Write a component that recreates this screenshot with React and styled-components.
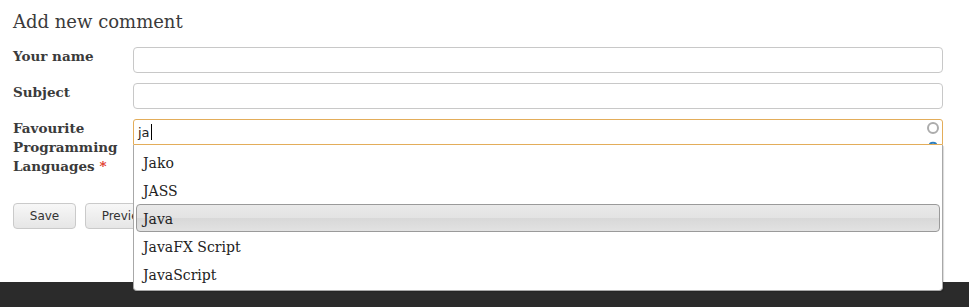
import styled, {createGlobalStyle} from "styled-components";

const GlobalStyle = createGlobalStyle`
  html, body {
    margin: 0;
    padding: 0;
    background: #fff;
  }
`

const Page = styled.div`
  min-height: 100vh;
  display: flex;
  flex-direction: column;
`
const Main = styled.main`
  flex: 1;
  padding: 10px 26px 0 13px;
`
const Heading = styled.h2`
  margin: 0 0 13px;
  font-family: "DejaVu Serif", Georgia, serif;
  font-weight: normal;
  font-size: 18px;
  line-height: 24px;
  color: #3b3b3b;
`
const Row = styled.div`
  display: grid;
  grid-template-columns: 120px 1fr;
  align-items: start;
  margin-bottom: 10px;
`
const Label = styled.label`
  font-family: "DejaVu Serif", Georgia, serif;
  font-weight: bold;
  font-size: 13.5px;
  line-height: 19px;
  color: #3b3b3b;
`
const Required = styled.span`
  color: #e0392b;
`
const Field = styled.div`
  position: relative;
`
const TextBox = styled.div`
  box-sizing: border-box;
  height: 26px;
  border: 1px solid ${(p) => (p.$focus ? "#e3ad5a" : "#c8c8c8")};
  border-radius: ${(p) => (p.$focus ? "3px 3px 0 0" : "4px")};
  background: #fff;
  padding: 0 24px 0 4px;
  display: flex;
  align-items: center;
  font-family: "DejaVu Sans", Verdana, sans-serif;
  font-size: 13px;
  color: #222;
`
const Caret = styled.span`
  display: inline-block;
  width: 1px;
  height: 16px;
  background: #000;
  margin-left: 1px;
`
const Throbber = styled.svg`
  position: absolute;
  right: 2px;
  top: 1px;
  width: 16px;
  height: 24px;
`
const Menu = styled.ul`
  position: absolute;
  top: 100%;
  left: 0;
  right: 0;
  box-sizing: border-box;
  height: 146px;
  margin: 0;
  padding: 3px 0 0;
  list-style: none;
  background: #fff;
  border: 1px solid #a8a8a8;
  border-top: none;
  border-radius: 0 0 4px 4px;
  box-shadow: 1px 1px 1px rgba(0, 0, 0, 0.15);
  z-index: 2;
`
const Item = styled.li`
  box-sizing: border-box;
  height: 28px;
  margin: 0 2px;
  padding: 1px 6px 0;
  display: flex;
  align-items: center;
  font-family: "DejaVu Serif", Georgia, serif;
  font-size: 14px;
  color: #222;
  border: 1px solid ${(p) => (p.$active ? "#9a9a9a" : "transparent")};
  border-radius: 4px;
  background: ${(p) => (p.$active ? "linear-gradient(#e9e9e9 0%, #e3e3e3 50%, #d8d8d8 51%, #e2e2e2 100%)" : "transparent")};
`
const Actions = styled.div`
  display: flex;
  gap: 9px;
  margin-top: 27px;
`
const Button = styled.button`
  height: 26px;
  width: ${(p) => p.$w}px;
  border: 1px solid #cacaca;
  border-radius: 4px;
  background: linear-gradient(#f7f7f7, #e6e6e6);
  font-family: "DejaVu Sans", Verdana, sans-serif;
  font-size: 12px;
  color: #333;
  padding: 0;
  cursor: pointer;
`
const Footer = styled.footer`
  height: 25px;
  background: #2b2b2b;
`

const languages = ["Jako", "JASS", "Java", "JavaFX Script", "JavaScript"]

const App = () => {
    return (
        <Page>
            <GlobalStyle/>
            <Main>
                <Heading>Add new comment</Heading>
                <Row>
                    <Label>Your name</Label>
                    <Field><TextBox/></Field>
                </Row>
                <Row>
                    <Label>Subject</Label>
                    <Field><TextBox/></Field>
                </Row>
                <Row>
                    <Label>Favourite<br/>Programming<br/>Languages <Required>*</Required></Label>
                    <Field>
                        <TextBox $focus>ja<Caret/></TextBox>
                        <Throbber viewBox="0 0 16 24">
                            <circle cx="8" cy="8" r="5" fill="none" stroke="#acacac" strokeWidth="2"/>
                            <path d="M4.5 24 Q8 21.5 11.5 24" fill="none" stroke="#2d7fc0" strokeWidth="2"/>
                        </Throbber>
                        <Menu>
                            {languages.map((l) => (
                                <Item key={l} $active={l === "Java"}>{l}</Item>
                            ))}
                        </Menu>
                    </Field>
                </Row>
                <Actions>
                    <Button $w={63}>Save</Button>
                    <Button $w={80}>Preview</Button>
                </Actions>
            </Main>
            <Footer/>
        </Page>
    )
}

export default App
